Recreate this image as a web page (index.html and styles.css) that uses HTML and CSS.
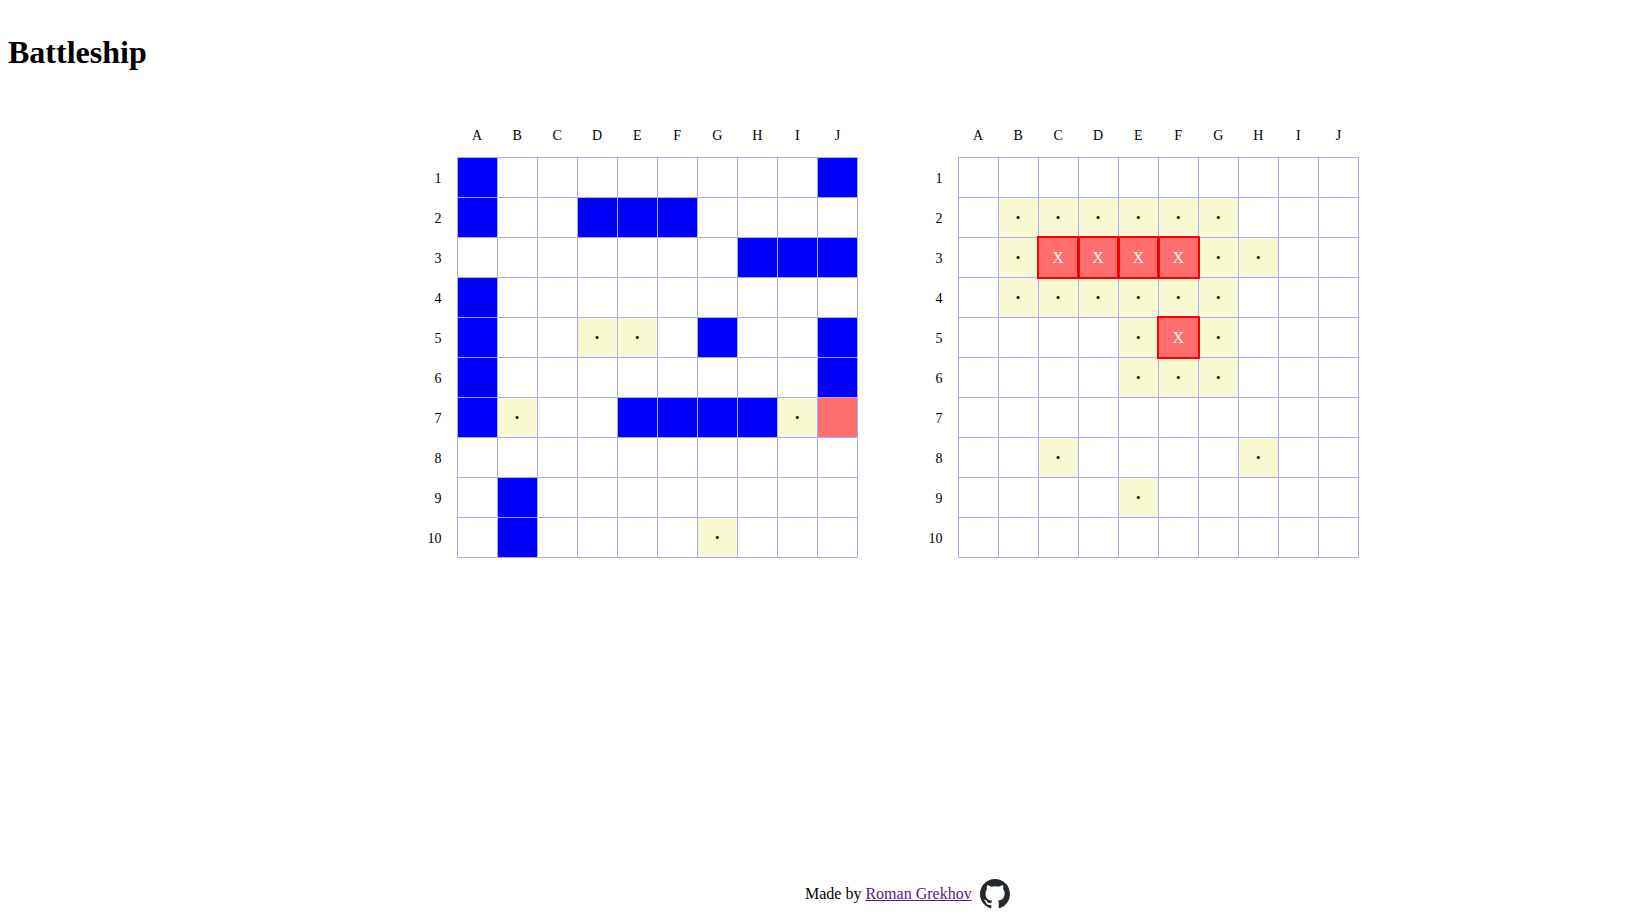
FILE: index.html
```html
<!DOCTYPE html>
<html>
  <head>
    <meta charset="UTF-8" />
    <title>Battleship</title>
    <link rel="stylesheet" href="styles.css">
  </head>
  <body>
    <h1 class="title">Battleship</h1>
    <main class="boards">
      <table class="board">
        <tr><th></th><th>A</th><th>B</th><th>C</th><th>D</th><th>E</th><th>F</th><th>G</th><th>H</th><th>I</th><th>J</th></tr>
        <tr><th>1</th><td class="ship"></td><td></td><td></td><td></td><td></td><td></td><td></td><td></td><td></td><td class="ship"></td></tr>
        <tr><th>2</th><td class="ship"></td><td></td><td></td><td class="ship"></td><td class="ship"></td><td class="ship"></td><td></td><td></td><td></td><td></td></tr>
        <tr><th>3</th><td></td><td></td><td></td><td></td><td></td><td></td><td></td><td class="ship"></td><td class="ship"></td><td class="ship"></td></tr>
        <tr><th>4</th><td class="ship"></td><td></td><td></td><td></td><td></td><td></td><td></td><td></td><td></td><td></td></tr>
        <tr><th>5</th><td class="ship"></td><td></td><td></td><td class="miss">•</td><td class="miss">•</td><td></td><td class="ship"></td><td></td><td></td><td class="ship"></td></tr>
        <tr><th>6</th><td class="ship"></td><td></td><td></td><td></td><td></td><td></td><td></td><td></td><td></td><td class="ship"></td></tr>
        <tr><th>7</th><td class="ship"></td><td class="miss">•</td><td></td><td></td><td class="ship"></td><td class="ship"></td><td class="ship"></td><td class="ship"></td><td class="miss">•</td><td class="wreck"></td></tr>
        <tr><th>8</th><td></td><td></td><td></td><td></td><td></td><td></td><td></td><td></td><td></td><td></td></tr>
        <tr><th>9</th><td></td><td class="ship"></td><td></td><td></td><td></td><td></td><td></td><td></td><td></td><td></td></tr>
        <tr><th>10</th><td></td><td class="ship"></td><td></td><td></td><td></td><td></td><td class="miss">•</td><td></td><td></td><td></td></tr>
      </table>
      <table class="board">
        <tr><th></th><th>A</th><th>B</th><th>C</th><th>D</th><th>E</th><th>F</th><th>G</th><th>H</th><th>I</th><th>J</th></tr>
        <tr><th>1</th><td></td><td></td><td></td><td></td><td></td><td></td><td></td><td></td><td></td><td></td></tr>
        <tr><th>2</th><td></td><td class="miss">•</td><td class="miss">•</td><td class="miss">•</td><td class="miss">•</td><td class="miss">•</td><td class="miss">•</td><td></td><td></td><td></td></tr>
        <tr><th>3</th><td></td><td class="miss">•</td><td class="hit">X</td><td class="hit">X</td><td class="hit">X</td><td class="hit">X</td><td class="miss">•</td><td class="miss">•</td><td></td><td></td></tr>
        <tr><th>4</th><td></td><td class="miss">•</td><td class="miss">•</td><td class="miss">•</td><td class="miss">•</td><td class="miss">•</td><td class="miss">•</td><td></td><td></td><td></td></tr>
        <tr><th>5</th><td></td><td></td><td></td><td></td><td class="miss">•</td><td class="hit">X</td><td class="miss">•</td><td></td><td></td><td></td></tr>
        <tr><th>6</th><td></td><td></td><td></td><td></td><td class="miss">•</td><td class="miss">•</td><td class="miss">•</td><td></td><td></td><td></td></tr>
        <tr><th>7</th><td></td><td></td><td></td><td></td><td></td><td></td><td></td><td></td><td></td><td></td></tr>
        <tr><th>8</th><td></td><td></td><td class="miss">•</td><td></td><td></td><td></td><td></td><td class="miss">•</td><td></td><td></td></tr>
        <tr><th>9</th><td></td><td></td><td></td><td></td><td class="miss">•</td><td></td><td></td><td></td><td></td><td></td></tr>
        <tr><th>10</th><td></td><td></td><td></td><td></td><td></td><td></td><td></td><td></td><td></td><td></td></tr>
      </table>
    </main>
    <footer class="footer">
      <span>Made by <a class="author" href="#">Roman Grekhov</a></span>
      <svg class="github" viewBox="0 0 16 16" width="30" height="30" aria-hidden="true">
        <path fill="#24292e" d="M8 0C3.58 0 0 3.58 0 8c0 3.54 2.29 6.53 5.47 7.59.4.07.55-.17.55-.38 0-.19-.01-.82-.01-1.49-2.01.37-2.53-.49-2.69-.94-.09-.23-.48-.94-.82-1.13-.28-.15-.68-.52-.01-.53.63-.01 1.08.58 1.23.82.72 1.21 1.87.87 2.33.66.07-.52.28-.87.51-1.07-1.78-.2-3.64-.89-3.64-3.95 0-.87.31-1.59.82-2.15-.08-.2-.36-1.02.08-2.12 0 0 .67-.21 2.2.82.64-.18 1.32-.27 2-.27.68 0 1.36.09 2 .27 1.53-1.04 2.2-.82 2.2-.82.44 1.1.16 1.92.08 2.12.51.56.82 1.27.82 2.15 0 3.07-1.87 3.75-3.65 3.95.29.25.54.73.54 1.48 0 1.07-.01 1.93-.01 2.2 0 .21.15.46.55.38A8.013 8.013 0 0016 8c0-4.42-3.58-8-8-8z"/>
      </svg>
    </footer>
  </body>
</html>
```
FILE: styles.css
```css
html, body {
  height: 100%;
  margin: 0;
}

body {
  box-sizing: border-box;
  padding: 8px 8px 5px;
  display: flex;
  flex-direction: column;
  font-family: "Liberation Serif", serif;
  font-size: 16px;
  color: #000;
  background-color: #fff;
}

.title {
  margin: 26px 0 0;
  font-size: 32px;
  line-height: 37px;
}

.boards {
  display: flex;
  gap: 60px;
  margin: 46px 0 0 409px;
}

.board {
  border-collapse: collapse;
  table-layout: fixed;
  width: 441px;
  font-size: 14px;
}

.board tr {
  height: 40px;
}

.board th {
  width: 40px;
  padding: 0 0 2px;
  font-weight: normal;
  text-align: center;
}

.board th:first-child {
  padding: 4px 15px 0 0;
  box-sizing: border-box;
  text-align: right;
}

.board td {
  width: 40px;
  height: 40px;
  padding: 2px 0 0;
  box-sizing: border-box;
  border: 1px solid #aaf;
  text-align: center;
}

.ship {
  background-color: #00f;
}

.board .miss {
  background-color: #fafad2;
  font-size: 13px;
}

.wreck {
  background-color: #ff6d6d;
}

.hit {
  position: relative;
  background-color: #ff6d6d;
  color: #fff;
  font-size: 16px;
}

.hit::after {
  content: "";
  position: absolute;
  z-index: 1;
  top: -2px;
  left: -2px;
  width: 39px;
  height: 39px;
  border: 2px solid #f00;
}

.footer {
  margin-top: auto;
  margin-left: 797px;
  display: flex;
  align-items: center;
  gap: 8px;
}

.author {
  color: #551a8b;
}
```
